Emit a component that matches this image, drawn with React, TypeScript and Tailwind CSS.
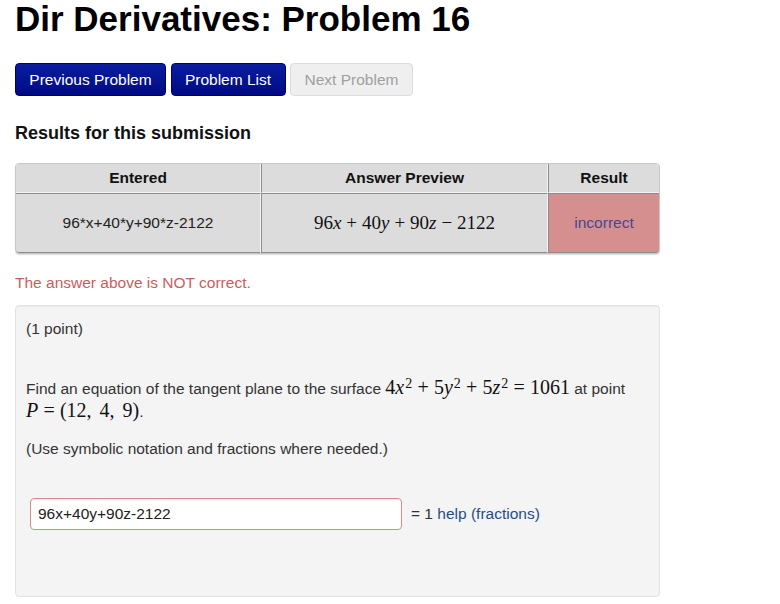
import React from "react";

const serif = "font-['Liberation_Serif','Times_New_Roman',serif]";

// math bits
const V = ({ c }: { c: string }) => <span className="italic">{c}</span>;
const Op = ({ c }: { c: string }) => <span className="mx-[0.26em]">{c}</span>;
const Sq = () => <span className="relative -top-[0.42em] ml-[1px] text-[0.7em] leading-none">2</span>;

const App = () => {
  return (
    <div className="min-h-screen bg-white px-[15px] font-['Liberation_Sans',Arial,sans-serif] text-[15.5px] text-[#333]">
      <h1 className="text-[35px] leading-[38px] font-bold text-black">Dir Derivatives: Problem 16</h1>

      {/* nav buttons */}
      <div className="mt-[25px] flex gap-[4.5px]">
        <button className="h-[33px] w-[151px] rounded-[4px] border border-[#000070] bg-linear-to-b from-[#0b1da0] to-[#000a82] text-white">
          Previous Problem
        </button>
        <button className="h-[33px] w-[115px] rounded-[4px] border border-[#000070] bg-linear-to-b from-[#0b1da0] to-[#000a82] text-white">
          Problem List
        </button>
        <button disabled className="h-[33px] w-[123px] rounded-[4px] border border-[#dcdcdc] bg-[#efefef] text-[#a0a0a0]">
          Next Problem
        </button>
      </div>

      <h3 className="mt-[27px] text-[18px] leading-[20px] font-bold text-[#111]">Results for this submission</h3>

      {/* attempt results */}
      <table className="mt-[20px] w-[645px] border-separate border-spacing-0 rounded-[4px] border border-[#c8c8c8] text-center shadow-[0_1px_1px_rgba(0,0,0,0.15)]">
        <thead>
          <tr className="h-[29px]">
            <th className="w-[245px] rounded-tl-[3px] border-r border-b border-r-[#f4f4f4] border-b-[#f4f4f4] bg-[#dcdcdc] font-bold text-[#111]">Entered</th>
            <th className="w-[287px] border-x border-b border-l-[#8c8c8c] border-r-[#f4f4f4] border-b-[#f4f4f4] bg-[#dcdcdc] font-bold text-[#111]">Answer Preview</th>
            <th className="rounded-tr-[3px] border-l border-b border-l-[#8c8c8c] border-b-[#f4f4f4] bg-[#dcdcdc] font-bold text-[#111]">Result</th>
          </tr>
        </thead>
        <tbody>
          <tr className="h-[60px]">
            <td className="rounded-bl-[3px] border-t border-r border-b border-t-[#8c8c8c] border-r-[#f4f4f4] border-b-[#8c8c8c] bg-[#dcdcdc] text-[#222]">
              96*x+40*y+90*z-2122
            </td>
            <td className={`border border-t-[#8c8c8c] border-l-[#8c8c8c] border-r-[#f4f4f4] border-b-[#8c8c8c] bg-[#dcdcdc] text-[19px] text-[#111] ${serif}`}>
              96<V c="x" />
              <Op c="+" />
              40<V c="y" />
              <Op c="+" />
              90<V c="z" />
              <Op c="−" />
              2122
            </td>
            <td className="rounded-br-[3px] border-t border-l border-b border-t-[#8c8c8c] border-l-[#8c8c8c] border-b-[#8c8c8c] bg-[#d68f8f] text-[#44479a]">
              incorrect
            </td>
          </tr>
        </tbody>
      </table>

      <p className="mt-[17.5px] leading-[22px] text-[#c95e5e]">The answer above is NOT correct.</p>

      {/* problem body */}
      <div className="mt-[11.5px] h-[292px] w-[645px] rounded-[4px] border border-[#e3e3e3] bg-[#f4f4f4] px-[10px] pt-[11.5px] leading-[22px] shadow-[inset_0_1px_1px_rgba(0,0,0,0.04)]">
        <p>(1 point)</p>
        <p className="mt-[37px] leading-[22.5px]">
          Find an equation of the tangent plane to the surface{" "}
          <span className={`text-[20px] leading-none text-[#111] ${serif}`}>
            4<V c="x" />
            <Sq />
            <Op c="+" />
            5<V c="y" />
            <Sq />
            <Op c="+" />
            5<V c="z" />
            <Sq />
            <Op c="=" />
            1061
          </span>{" "}
          at point
          <br />
          <span className={`text-[20px] leading-none text-[#111] ${serif}`}>
            <V c="P" />
            <Op c="=" />
            (12,<span className="ml-[0.4em]">4,</span>
            <span className="ml-[0.4em]">9)</span>
          </span>
          .
        </p>
        <p className="mt-[14px]">(Use symbolic notation and fractions where needed.)</p>

        <div className="mt-[38.5px] ml-[4px] flex items-center gap-[9px]">
          <input
            readOnly
            value="96x+40y+90z-2122"
            className="h-[32px] w-[372px] rounded-[4px] border border-[#d48a8a] bg-white px-[7px] text-[15.5px] text-[#222] shadow-[inset_0_1px_1px_rgba(0,0,0,0.08)] outline-none"
          />
          <span>
            = 1 <span className="text-[#1e4e8c]">help (fractions)</span>
          </span>
        </div>
      </div>
    </div>
  );
};

export default App;
